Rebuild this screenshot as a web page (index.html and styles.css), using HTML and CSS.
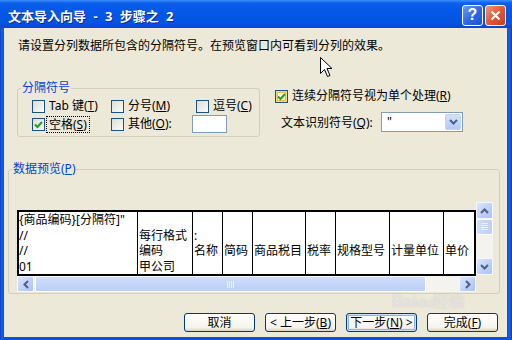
FILE: index.html
```html
<!DOCTYPE html>
<html lang="zh-CN">
<head>
  <meta charset="UTF-8">
  <title>文本导入向导</title>
  <link rel="stylesheet" href="styles.css">
</head>
<body>
  <div class="window">
    <div class="titlebar">
      <span class="title">文本导入向导 - 3 步骤之 2</span>
      <span class="cap-btn help">?</span>
      <span class="cap-btn close">
        <svg width="11" height="11" viewBox="0 0 11 11"><path d="M1.5 1.5 L9.5 9.5 M9.5 1.5 L1.5 9.5" stroke="#fff" stroke-width="2" fill="none"/></svg>
      </span>
    </div>

    <div class="client">
      <p class="intro">请设置分列数据所包含的分隔符号。在预览窗口内可看到分列的效果。</p>

      <div class="options">
        <fieldset class="group delims">
          <legend>分隔符号</legend>
          <div class="delim-grid">
            <label class="chk"><span class="box"></span><span>Tab 键(<u>T</u>)</span></label>
            <label class="chk"><span class="box"></span><span>分号(<u>M</u>)</span></label>
            <label class="chk"><span class="box"></span><span>逗号(<u>C</u>)</span></label>
            <label class="chk"><span class="box"><svg width="9" height="9" viewBox="0 0 9 9"><polyline points="1,4.5 3.5,7 8,2" stroke="#21a121" stroke-width="2" fill="none"/></svg></span><span class="focus">空格(<u>S</u>)</span></label>
            <label class="chk other"><span class="box"></span><span class="other-label">其他(<u>O</u>):</span><span class="textbox"></span></label>
          </div>
        </fieldset>

        <div class="side">
          <label class="chk"><span class="box hot"><svg width="9" height="9" viewBox="0 0 9 9"><polyline points="1,4.5 3.5,7 8,2" stroke="#21a121" stroke-width="2" fill="none"/></svg></span><span>连续分隔符号视为单个处理(<u>R</u>)</span></label>
          <div class="qualifier">
            <span class="qual-label">文本识别符号(<u>Q</u>):</span>
            <span class="combo">
              <span class="combo-val">"</span>
              <span class="combo-btn"><svg width="9" height="6" viewBox="0 0 9 6"><polyline points="1,1 4.5,4.5 8,1" stroke="#4d6185" stroke-width="2" fill="none"/></svg></span>
            </span>
          </div>
        </div>
      </div>

      <fieldset class="group preview">
        <legend>数据预览(<u>P</u>)</legend>
        <div class="pv">
          <div class="pv-main">
            <div class="sheet">
              <div class="col c1">{商品编码}[分隔符]"<br>//<br>//<br>01</div>
              <div class="col c2"><br>每行格式<br>编码<br>甲公司</div>
              <div class="col c3"><br>:<br>名称</div>
              <div class="col c4"><br><br>简码</div>
              <div class="col c5"><br><br>商品税目</div>
              <div class="col c6"><br><br>税率</div>
              <div class="col c7"><br><br>规格型号</div>
              <div class="col c8"><br><br>计量单位</div>
              <div class="col c9"><br><br>单价</div>
            </div>
            <div class="hscroll">
              <span class="sb-btn"><svg width="6" height="9" viewBox="0 0 6 9"><polyline points="5,1 1.5,4.5 5,8" stroke="#4d6185" stroke-width="2" fill="none"/></svg></span>
              <span class="hthumb"><svg width="8" height="7" viewBox="0 0 8 7"><path d="M0.5 0 V7 M2.5 0 V7 M4.5 0 V7 M6.5 0 V7" stroke="#eef3fe" stroke-width="1"/></svg></span>
              <span class="htrack"></span>
              <span class="sb-btn"><svg width="6" height="9" viewBox="0 0 6 9"><polyline points="1,1 4.5,4.5 1,8" stroke="#4d6185" stroke-width="2" fill="none"/></svg></span>
            </div>
          </div>
          <div class="vscroll">
            <span class="sb-btn v"><svg width="9" height="6" viewBox="0 0 9 6"><polyline points="1,5 4.5,1.5 8,5" stroke="#4d6185" stroke-width="2" fill="none"/></svg></span>
            <span class="vthumb"><svg width="7" height="8" viewBox="0 0 7 8"><path d="M0 0.5 H7 M0 2.5 H7 M0 4.5 H7 M0 6.5 H7" stroke="#eef3fe" stroke-width="1"/></svg></span>
            <span class="vtrack"></span>
            <span class="sb-btn v"><svg width="9" height="6" viewBox="0 0 9 6"><polyline points="1,1 4.5,4.5 8,1" stroke="#4d6185" stroke-width="2" fill="none"/></svg></span>
          </div>
        </div>
      </fieldset>

      <div class="actions">
        <button class="btn">取消</button>
        <button class="btn">&lt; 上一步(<u>B</u>)</button>
        <button class="btn default">下一步(<u>N</u>) &gt;</button>
        <button class="btn">完成(<u>F</u>)</button>
      </div>
    </div>

    <!-- mouse pointer and watermark sit over the dialog -->
    <svg class="cursor" width="13" height="21" viewBox="0 0 13 21">
      <path d="M0.5 0.5 V16.5 L4.5 12.5 L7.5 19.5 L10 18.5 L7 11.5 H12 Z" fill="#fff" stroke="#000" stroke-width="1"/>
    </svg>
    <div class="watermark">Bai<span class="du">du</span>经验</div>
  </div>
</body>
</html>
```

FILE: styles.css
```css
* {
  box-sizing: border-box;
}

body {
  margin: 0;
  font-family: "Noto Sans", "Noto Sans CJK SC", sans-serif;
  font-size: 12px;
  color: #000;
  background: #0a4ed6;
}

.window {
  position: relative;
  width: 512px;
  height: 340px;
  display: flex;
  flex-direction: column;
  overflow: hidden;
  background: linear-gradient(90deg, #0a44c8, #1a5ee6 2px, #0b50d8 4px, #0b50d8 calc(100% - 5px), #1a5ee6 calc(100% - 2px), #0838b8);
}

/* title bar */
.titlebar {
  flex: none;
  height: 28px;
  display: flex;
  align-items: center;
  padding: 2px 6px 0 8px;
  background: linear-gradient(#3d8ffc 0, #0d60ea 3px, #0558e8 35%, #0254e3 80%, #0a47cd 100%);
}

.title {
  flex: 1;
  color: #fff;
  font-weight: bold;
  font-size: 13px;
  word-spacing: 4px;
  white-space: pre;
  text-shadow: 1px 1px #0f2a8a;
}

.cap-btn {
  width: 21px;
  height: 21px;
  margin-left: 2px;
  border: 1px solid #fff;
  border-radius: 3px;
  display: flex;
  align-items: center;
  justify-content: center;
}

.help {
  background: linear-gradient(135deg, #6c9cf8, #2d66e2 55%, #1d50d0);
  color: #fff;
  font: bold 16px "Liberation Sans", sans-serif;
}

.close {
  background: linear-gradient(135deg, #f3977a, #e2593a 50%, #c53d1c);
}

/* dialog body */
.client {
  flex: 1;
  margin: 0 5px 3px 4px;
  padding-top: 10px;
  background: #ece9d8;
}

.intro {
  margin: 0 0 0 14px;
  line-height: 16px;
}

.options {
  display: flex;
  align-items: flex-start;
  margin-top: 28px;
}

.group {
  margin: 0;
  padding: 0;
  min-width: 0;
  border: 1px solid #d0d0bf;
  border-radius: 3px;
}

.group legend {
  margin-left: 3px;
  padding: 0 1px;
  color: #0046d5;
  font-size: 12px;
  line-height: 12px;
}

.delims {
  width: 243px;
  margin-left: 13px;
}

.delim-grid {
  display: grid;
  grid-template-columns: 79px 85px 1fr;
  grid-auto-rows: 18px;
  padding: 3px 0 3px 14px;
}

.chk {
  display: flex;
  align-items: center;
  gap: 4px;
  height: 18px;
  line-height: 16px;
  white-space: nowrap;
}

.box {
  flex: none;
  width: 13px;
  height: 13px;
  border: 1px solid #1c5180;
  background: linear-gradient(135deg, #dcdcd7, #fbfbf9);
  display: flex;
  align-items: center;
  justify-content: center;
}

.box.hot {
  box-shadow: inset 0 0 0 1px #fbd97c, inset 0 0 0 2px #f5b94a;
  background: #fdfcf3;
}

.focus {
  margin-left: -2px;
  padding: 0 2px;
  line-height: 15px;
  outline: 1px dotted #000;
}

.other {
  grid-column: 2 / 4;
}

.other-label {
  display: inline-block;
  width: 60px;
}

.textbox {
  width: 35px;
  height: 18px;
  border: 1px solid #7f9db9;
  background: #fff;
}

.side {
  margin-left: 15px;
  padding-top: 5px;
}

.qualifier {
  display: flex;
  align-items: center;
  margin: 7px 0 0 6px;
}

.qual-label {
  width: 100px;
}

.combo {
  width: 82px;
  height: 20px;
  display: flex;
  padding: 1px;
  border: 1px solid #7f9db9;
  background: #fff;
}

.combo-val {
  flex: 1;
  padding-left: 4px;
  line-height: 16px;
}

.combo-btn {
  width: 16px;
  border: 1px solid #c3d3fb;
  border-radius: 2px;
  background: linear-gradient(#d3e0fd, #b5c9f6);
  display: flex;
  align-items: center;
  justify-content: center;
}

/* preview */
.preview {
  margin: 26px 7px 0 4px;
}

.pv {
  display: flex;
  padding: 27px 6px 1px 8px;
}

.pv-main {
  width: 459px;
  padding-top: 8px;
}

.sheet {
  display: flex;
  height: 66px;
  overflow: hidden;
  border: 2px solid #000;
  background: #fff;
  line-height: 15.5px;
}

.col {
  flex: none;
  padding: 0 1px;
  border-left: 1px solid #000;
  white-space: nowrap;
  overflow: hidden;
}

.c1 { width: 118px; border-left: none; padding-left: 0; }
.c2 { width: 55px; }
.c3 { width: 30px; }
.c4 { width: 30px; }
.c5 { width: 53px; }
.c6 { width: 30px; }
.c7 { width: 54px; }
.c8 { width: 54px; }
.c9 { width: 31px; }

.hscroll {
  display: flex;
  height: 16px;
  background: #f4f3ee;
}

.sb-btn {
  flex: none;
  width: 17px;
  height: 16px;
  border: 1px solid #f4f7fe;
  border-radius: 2px;
  background: linear-gradient(135deg, #dbe6fe, #bccefa 60%, #aec3f3);
  display: flex;
  align-items: center;
  justify-content: center;
}

.sb-btn.v {
  height: 17px;
}

.hthumb {
  flex: none;
  width: 391px;
  margin-left: 1px;
  border: 1px solid #fff;
  border-radius: 2px;
  background: linear-gradient(#cfdcfc, #bccff9);
  display: flex;
  align-items: center;
  justify-content: center;
}

.htrack,
.vtrack {
  flex: 1;
}

.vscroll {
  width: 17px;
  height: 73px;
  display: flex;
  flex-direction: column;
  background: #f4f3ee;
}

.vthumb {
  flex: none;
  height: 16px;
  border: 1px solid #fff;
  border-radius: 2px;
  background: linear-gradient(90deg, #cfdcfc, #bccff9);
  display: flex;
  align-items: center;
  justify-content: center;
}

/* bottom buttons */
.actions {
  display: flex;
  justify-content: flex-end;
  gap: 10px;
  margin-top: 19px;
  padding-right: 9px;
}

.btn {
  width: 71px;
  height: 19px;
  padding: 0;
  border: 1px solid #003c74;
  border-radius: 3px;
  background: linear-gradient(#ffffff, #f4f3ee 80%, #d8d2c6);
  font: 12px "Noto Sans", "Noto Sans CJK SC", sans-serif;
  line-height: 17px;
  color: #000;
}

.btn.default {
  box-shadow: inset 0 0 0 1px #cee0fb, inset 0 0 0 2px #8fb0ec;
}

.cursor {
  position: absolute;
  left: 320px;
  top: 57px;
}

.watermark {
  position: absolute;
  left: 392px;
  top: 294px;
  font: bold 16px "Liberation Sans", "Noto Sans CJK SC", sans-serif;
  line-height: 16px;
  color: rgba(255, 255, 255, 0.55);
  text-shadow: 0 0 1px rgba(150, 150, 150, 0.5);
  white-space: nowrap;
}

.watermark .du {
  font-size: 13px;
}
```
